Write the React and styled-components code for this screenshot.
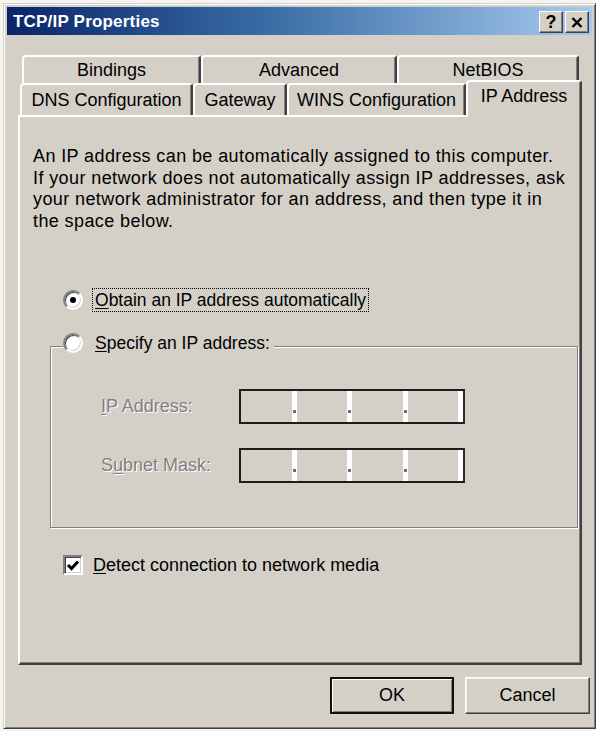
import React from "react";
import styled, { createGlobalStyle } from "styled-components";

const GlobalStyle = createGlobalStyle`
  html, body { margin: 0; padding: 0; background: #f4f4f2; }
  body { font-family: "Liberation Sans", Arial, sans-serif; }
  * { box-sizing: border-box; }
`;

const Window = styled.div`
  margin: 3px 0 0 3px;
  width: 593px;
  height: 726px;
  background: #d4d0c8;
  border: 1px solid;
  border-color: #d4d0c8 #404040 #404040 #d4d0c8;
  box-shadow: inset 1px 1px 0 #fff, inset -1px -1px 0 #808080;
  padding: 3px;
  display: flex;
  flex-direction: column;
  font-family: "Liberation Sans", Arial, sans-serif;
  font-size: 18px;
  color: #000;
`;

const TitleBar = styled.div`
  height: 28px;
  background: linear-gradient(to right, #0a246a 0%, #3a6ea5 45%, #a6caf0 100%);
  display: flex;
  align-items: center;
  padding: 2px 3px 0 6px;
`;

const Title = styled.div`
  flex: 1;
  color: #fff;
  font-weight: bold;
  font-size: 17px;
  letter-spacing: 0.2px;
`;

const CaptionButton = styled.div`
  width: 24px;
  height: 22px;
  margin-left: ${(p) => (p.$gap ? "2px" : "0")};
  background: #d4d0c8;
  border: 1px solid;
  border-color: #fff #404040 #404040 #fff;
  box-shadow: inset -1px -1px 0 #808080;
  display: flex;
  align-items: center;
  justify-content: center;
  font-weight: bold;
  font-size: 18px;
  line-height: 1;
  color: #000;
`;

const Body = styled.div`
  display: flex;
  flex-direction: column;
  padding-top: 20px;
`;

const TabRow = styled.div`
  display: flex;
  align-items: flex-end;
  height: ${(p) => p.$h}px;
  margin-left: ${(p) => p.$ml}px;
`;

const Tab = styled.div`
  width: ${(p) => p.$w}px;
  height: ${(p) => (p.$selected ? 37 : p.$h)}px;
  margin-bottom: ${(p) => (p.$selected ? "-2px" : "0")};
  position: ${(p) => (p.$selected ? "relative" : "static")};
  z-index: ${(p) => (p.$selected ? 2 : "auto")};
  background: #d4d0c8;
  border-left: 2px solid #fff;
  border-top: 2px solid #fff;
  border-right: 2px solid #404040;
  border-top-left-radius: 4px;
  border-top-right-radius: 3px;
  box-shadow: inset -1px 0 0 #808080;
  display: flex;
  align-items: center;
  justify-content: center;
  padding-bottom: ${(p) => (p.$selected ? "6px" : "0")};
  font-size: 18px;
  white-space: nowrap;
`;

const Panel = styled.div`
  margin-left: 11px;
  width: 564px;
  height: 550px;
  border: 2px solid;
  border-color: #fff #404040 #404040 #fff;
  box-shadow: inset -1px -1px 0 #808080;
  padding: 29px 0 0 13px;
  display: flex;
  flex-direction: column;
`;

const Intro = styled.p`
  margin: 0;
  font-size: 18px;
  letter-spacing: 0.4px;
  line-height: 21.5px;
  white-space: nowrap;
`;

const OptionRow = styled.div`
  display: flex;
  align-items: center;
  height: 24px;
  margin: 56px 0 0 30px;
`;

const RadioCircle = styled.span`
  width: 20px;
  height: 20px;
  flex: none;
  border-radius: 50%;
  background: #fff;
  border: 2px solid;
  border-color: #808080 #fff #fff #808080;
  box-shadow: inset 1px 1px 0 #404040, inset -1px -1px 0 #d4d0c8;
  display: flex;
  align-items: center;
  justify-content: center;
  &::after {
    content: "";
    width: 6px;
    height: 6px;
    border-radius: 50%;
    background: #000;
    display: ${(p) => (p.$checked ? "block" : "none")};
  }
`;

const OptionLabel = styled.span`
  margin-left: 9px;
  padding: 1px 2px;
  border: 1px dotted ${(p) => (p.$focus ? "#000" : "transparent")};
  font-size: 17.5px;
  line-height: 20px;
  white-space: nowrap;
`;

const Key = styled.span`
  text-decoration: underline;
  text-underline-offset: 2px;
`;

const Group = styled.fieldset`
  margin: 20px 2px 0 17px;
  padding: 29px 0 44px 0;
  border: 1px solid #808080;
  box-shadow: 1px 1px 0 #fff, inset 1px 1px 0 #fff;
  min-width: 0;
`;

const Legend = styled.legend`
  margin-left: 12px;
  padding: 0 1px 6px 0;
  background: #d4d0c8;
  display: flex;
  align-items: center;
  height: 28px;
`;

const FieldGrid = styled.div`
  display: grid;
  grid-template-columns: 138px 226px;
  row-gap: 24px;
  align-items: center;
  padding-left: 50px;
`;

const DisabledLabel = styled.span`
  color: #808080;
  text-shadow: 1px 1px 0 #fff;
  font-size: 18px;
  white-space: nowrap;
`;

const IpBox = styled.div`
  height: 35px;
  border: 2px solid #1c1c1c;
  border-right-color: #2a2a2a;
  display: flex;
  background: #d4d0c8;
`;

const Octet = styled.div`
  flex: 1;
`;

const Sep = styled.div`
  width: 5px;
  background: #fff;
  display: flex;
  align-items: flex-end;
  justify-content: center;
  padding-bottom: 9px;
`;

const Dot = styled.span`
  width: 3px;
  height: 3px;
  background: #6e6e6e;
`;

const CheckRow = styled.div`
  display: flex;
  align-items: center;
  height: 20px;
  margin: 27px 0 0 30px;
`;

const CheckBox = styled.span`
  width: 20px;
  height: 20px;
  flex: none;
  background: #fff;
  border: 2px solid;
  border-color: #808080 #fff #fff #808080;
  box-shadow: inset 1px 1px 0 #404040, inset -1px -1px 0 #d4d0c8;
  display: flex;
  align-items: center;
  justify-content: center;
`;

const CheckText = styled.span`
  margin-left: 10px;
  font-size: 18px;
  white-space: nowrap;
`;

const ButtonBar = styled.div`
  display: flex;
  justify-content: flex-end;
  gap: 11px;
  margin-top: 12px;
  padding-right: 2px;
`;

const PushButton = styled.div`
  width: ${(p) => p.$w}px;
  height: 37px;
  background: #d4d0c8;
  display: flex;
  align-items: center;
  justify-content: center;
  font-size: 18px;
  border: ${(p) => (p.$default ? "2px solid #111" : "1px solid")};
  border-color: ${(p) => (p.$default ? "#111" : "#fff #404040 #404040 #fff")};
  box-shadow: ${(p) =>
    p.$default
      ? "inset 1px 1px 0 #fff, inset -1px -1px 0 #808080"
      : "inset -1px -1px 0 #808080, inset 1px 1px 0 #f0f0f0"};
`;

const CloseGlyph = () => (
  <svg width="12" height="11" viewBox="0 0 12 11">
    <path d="M1.5 1 L10.5 10 M10.5 1 L1.5 10" stroke="#000" strokeWidth="2.4" />
  </svg>
);

const CheckGlyph = () => (
  <svg width="14" height="13" viewBox="0 0 14 13">
    <path d="M2 6 L5.5 9.5 L12 2.5" stroke="#000" strokeWidth="3" fill="none" />
  </svg>
);

const IpField = () => (
  <IpBox>
    {[0, 1, 2, 3].map((i) => (
      <React.Fragment key={i}>
        <Octet />
        <Sep>{i < 3 && <Dot />}</Sep>
      </React.Fragment>
    ))}
  </IpBox>
);

export default function App() {
  return (
    <>
      <GlobalStyle />
      <Window>
        <TitleBar>
          <Title>TCP/IP Properties</Title>
          <CaptionButton>?</CaptionButton>
          <CaptionButton $gap>
            <CloseGlyph />
          </CaptionButton>
        </TitleBar>
        <Body>
          <TabRow $h={28} $ml={15}>
            <Tab $w={179} $h={28}>Bindings</Tab>
            <Tab $w={196} $h={28}>Advanced</Tab>
            <Tab $w={182} $h={28}>NetBIOS</Tab>
          </TabRow>
          <TabRow $h={32} $ml={13}>
            <Tab $w={173} $h={32}>DNS Configuration</Tab>
            <Tab $w={94} $h={32}>Gateway</Tab>
            <Tab $w={179} $h={32}>WINS Configuration</Tab>
            <Tab $w={116} $selected>IP Address</Tab>
          </TabRow>
          <Panel>
            <Intro>
              An IP address can be automatically assigned to this computer.
              <br />
              If your network does not automatically assign IP addresses, ask
              <br />
              your network administrator for an address, and then type it in
              <br />
              the space below.
            </Intro>
            <OptionRow>
              <RadioCircle $checked />
              <OptionLabel $focus>
                <Key>O</Key>btain an IP address automatically
              </OptionLabel>
            </OptionRow>
            <Group>
              <Legend>
                <RadioCircle />
                <OptionLabel>
                  <Key>S</Key>pecify an IP address:
                </OptionLabel>
              </Legend>
              <FieldGrid>
                <DisabledLabel>
                  <Key>I</Key>P Address:
                </DisabledLabel>
                <IpField />
                <DisabledLabel>
                  S<Key>u</Key>bnet Mask:
                </DisabledLabel>
                <IpField />
              </FieldGrid>
            </Group>
            <CheckRow>
              <CheckBox>
                <CheckGlyph />
              </CheckBox>
              <CheckText>
                <Key>D</Key>etect connection to network media
              </CheckText>
            </CheckRow>
          </Panel>
          <ButtonBar>
            <PushButton $w={124} $default>OK</PushButton>
            <PushButton $w={125}>Cancel</PushButton>
          </ButtonBar>
        </Body>
      </Window>
    </>
  );
}
